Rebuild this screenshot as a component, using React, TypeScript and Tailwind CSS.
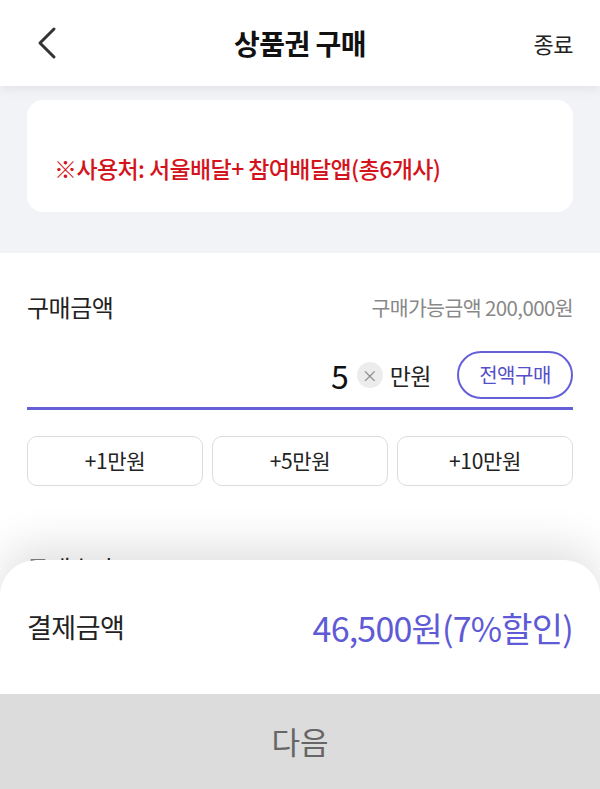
import React from "react";

const font = { fontFamily: '"Noto Sans CJK KR", "Noto Sans", sans-serif' };

export default function App() {
  return (
    <div className="relative w-[600px] h-[789px] overflow-hidden bg-white" style={font}>
      {/* Header */}
      <div className="relative z-10 h-[86px] bg-white flex items-center justify-between px-[27px] shadow-[0_4px_10px_rgba(0,0,0,0.06)]">
        <svg width="30" height="40" viewBox="0 0 30 40" className="ml-[6px]">
          <path d="M21 6 L7 20 L21 34" fill="none" stroke="#333" strokeWidth="3" strokeLinecap="round" strokeLinejoin="round" />
        </svg>
        <div className="absolute left-0 right-0 text-center text-[28px] font-bold text-[#111] tracking-[-0.5px] pointer-events-none">상품권 구매</div>
        <div className="text-[22px] text-[#222] tracking-[-0.5px]">종료</div>
      </div>

      {/* Gray notice area */}
      <div className="bg-[#f2f3f6] px-[27px] pt-[14px] pb-[41px]">
        <div className="h-[112px] bg-white rounded-[16px] px-[27px] pt-[51px]">
          <div className="text-[23px] leading-[34px] font-medium text-[#d4141c] tracking-[-0.6px]">※사용처: 서울배달+ 참여배달앱(총6개사)</div>
        </div>
      </div>

      {/* Amount section */}
      <div className="px-[27px] pt-[37px]">
        <div className="flex items-center justify-between h-[34px]">
          <div className="text-[24px] text-[#222] tracking-[-0.5px]">구매금액</div>
          <div className="text-[20.5px] text-[#888] tracking-[-0.6px]">구매가능금액 200,000원</div>
        </div>
        <div className="mt-[25px] flex items-center justify-end h-[52px] border-b-[3px] border-[#6560d8] pb-[6px] box-content">
          <span className="text-[32px] text-[#111] leading-none">5</span>
          <span className="ml-[8px] w-[26px] h-[26px] rounded-full bg-[#ececec] flex items-center justify-center text-[#888] text-[16px] leading-none">×</span>
          <span className="ml-[7px] text-[23px] text-[#222] tracking-[-0.5px]">만원</span>
          <button className="ml-[26px] w-[116px] h-[48px] rounded-full border-2 border-[#6560d8] text-[#5550c8] text-[20px] tracking-[-0.5px] flex items-center justify-center">전액구매</button>
        </div>
        <div className="mt-[26px] grid grid-cols-3 gap-[9px]">
          {["+1만원", "+5만원", "+10만원"].map((t) => (
            <button key={t} className="h-[50px] rounded-[10px] border border-[#dcdcdc] bg-white text-[21px] text-[#222] flex items-center justify-center tracking-[-0.3px]">
              {t}
            </button>
          ))}
        </div>
        <div className="mt-[64px] text-[24px] text-[#222] tracking-[-0.5px]">구매수단</div>
      </div>

      {/* Bottom sheet */}
      <div className="absolute left-0 right-0 bottom-0 z-20">
        <div className="bg-white rounded-t-[36px] h-[134px] px-[27px] flex items-center justify-between shadow-[0_-14px_44px_rgba(0,0,0,0.12)]">
          <div className="text-[27px] text-[#222] tracking-[-0.5px]">결제금액</div>
          <div className="text-[34px] text-[#5f5ad6] tracking-[-0.8px]">46,500원(7%할인)</div>
        </div>
        <div className="h-[95px] bg-[#dcdcdc] flex items-center justify-center text-[31px] text-[#666]">다음</div>
      </div>
    </div>
  );
}
